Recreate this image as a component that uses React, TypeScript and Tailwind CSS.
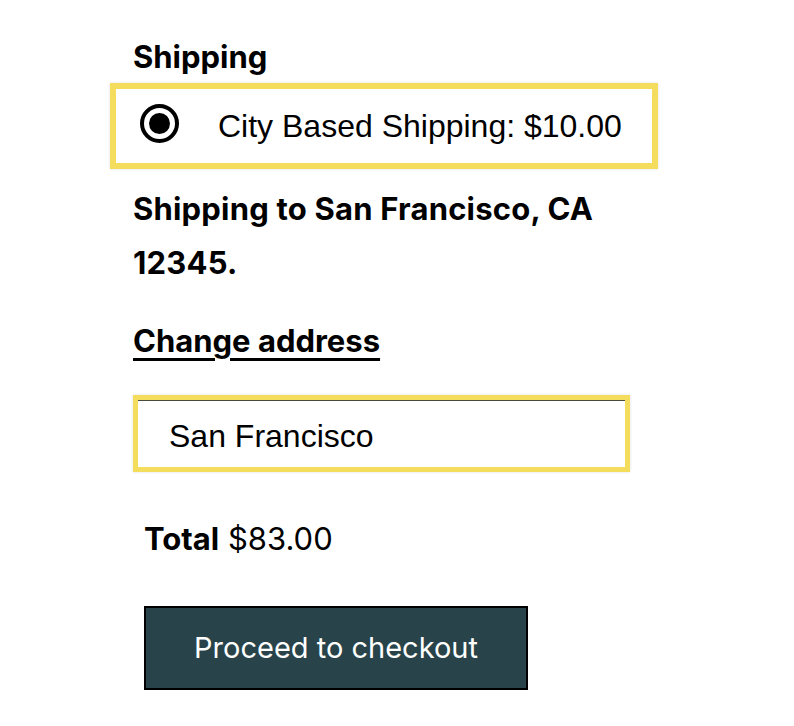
const App = () => {
  return (
    <div className="min-h-screen w-full bg-white pl-[133px] pt-[38px] text-black">
      <div className="flex flex-col font-['Inter',sans-serif]">
        <h2 className="text-[31px] font-bold leading-[38px]">Shipping</h2>
        <div className="ml-[-23px] mt-[7px] flex h-[86px] w-[548px] items-center border-[6px] border-[#f4dc5c] pl-[24px] shadow-[0_0_3px_rgba(0,0,0,0.12)]">
          <span className="mb-[6px] flex h-[39px] w-[39px] shrink-0 items-center justify-center rounded-full border-4 border-black">
            <span className="h-[21px] w-[21px] rounded-full bg-black" />
          </span>
          <span className="ml-[39px] font-['Liberation_Sans',sans-serif] text-[32px] leading-[37px]">
            City Based Shipping: $10.00
          </span>
        </div>
        <p className="mt-[13px] w-[520px] text-[31px] font-bold tracking-[0.2px] leading-[54px]">
          Shipping to San Francisco, CA 12345.
        </p>
        <a href="#" className="mt-[32px] w-fit text-[31px] font-bold leading-[38px] underline decoration-[2.5px] underline-offset-[6px]">
          Change address
        </a>
        <div className="mt-[35px] h-[77px] w-[497px] border-[5px] border-[#f4dc5c] shadow-[0_0_3px_rgba(0,0,0,0.12)]">
          <div className="flex h-full items-center border-t border-[#4a4a3a] pl-[31px] pt-[4px]">
            <span className="font-['Liberation_Sans',sans-serif] text-[32px] leading-[37px]">San Francisco</span>
          </div>
        </div>
        <p className="ml-[11px] mt-[48px] text-[31px] leading-[38px]">
          <span className="font-bold">Total</span> $83.00
        </p>
        <button className="ml-[11px] mt-[48px] flex h-[84px] w-[384px] items-center justify-center border-2 border-black bg-[#28444a] text-[29px] leading-[34px] text-white">
          Proceed to checkout
        </button>
      </div>
    </div>
  );
};

export default App;
